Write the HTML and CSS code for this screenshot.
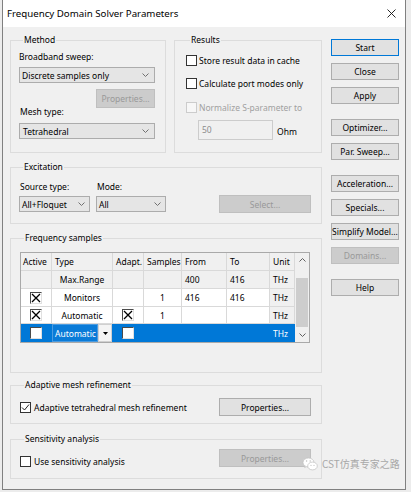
FILE: index.html
```html
<!DOCTYPE html>
<html lang="en">
<head>
<meta charset="utf-8">
<title>Frequency Domain Solver Parameters</title>
<link rel="stylesheet" href="styles.css">
</head>
<body>
<div class="window">
  <div class="titlebar">
    <span class="title">Frequency Domain Solver Parameters</span>
    <svg class="close-x" width="9" height="9" viewBox="0 0 9 9"><path d="M0.5 0.5L8.5 8.5M8.5 0.5L0.5 8.5" stroke="#111" stroke-width="0.9" fill="none"/></svg>
  </div>
  <div class="content">
    <div class="main">
      <div class="toprow">
        <div class="grp method">
          <div class="grp-title">Method</div>
          <div class="lbl m-bb">Broadband sweep:</div>
          <div class="combo m-combo1"><span>Discrete samples only</span><svg class="chev" width="7" height="4" viewBox="0 0 7 4"><path d="M0.5 0.5L3.5 3.5L6.5 0.5" stroke="#707070" fill="none"/></svg></div>
          <div class="mesh-row">
            <div class="lbl">Mesh type:</div>
            <div class="btn disabled m-prop">Properties...</div>
          </div>
          <div class="combo m-combo2"><span>Tetrahedral</span><svg class="chev" width="7" height="4" viewBox="0 0 7 4"><path d="M0.5 0.5L3.5 3.5L6.5 0.5" stroke="#707070" fill="none"/></svg></div>
        </div>
        <div class="grp results">
          <div class="grp-title">Results</div>
          <div class="chk-row r1"><span class="chk"></span><span>Store result data in cache</span></div>
          <div class="chk-row r2"><span class="chk"></span><span>Calculate port modes only</span></div>
          <div class="chk-row r3 dis"><span class="chk"></span><span>Normalize S-parameter to</span></div>
          <div class="ohm-row"><div class="input">50</div><span class="ohm">Ohm</span></div>
        </div>
      </div>

      <div class="grp excitation">
        <div class="grp-title">Excitation</div>
        <div class="ex-row">
          <div class="ex-col">
            <div class="lbl">Source type:</div>
            <div class="combo c-src"><span>All+Floquet</span><svg class="chev" width="7" height="4" viewBox="0 0 7 4"><path d="M0.5 0.5L3.5 3.5L6.5 0.5" stroke="#707070" fill="none"/></svg></div>
          </div>
          <div class="ex-col">
            <div class="lbl">Mode:</div>
            <div class="combo c-mode"><span>All</span><svg class="chev" width="7" height="4" viewBox="0 0 7 4"><path d="M0.5 0.5L3.5 3.5L6.5 0.5" stroke="#707070" fill="none"/></svg></div>
          </div>
          <div class="btn disabled b-wide b-select">Select...</div>
        </div>
      </div>

      <div class="grp freq">
        <div class="grp-title">Frequency samples</div>
        <div class="fgrid">
          <div class="hc">Active</div>
          <div class="hc">Type</div>
          <div class="hc">Adapt.</div>
          <div class="hc">Samples</div>
          <div class="hc">From</div>
          <div class="hc">To</div>
          <div class="hc">Unit</div>
          <div class="vscroll">
            <div class="sc-btn"><svg width="7" height="4" viewBox="0 0 7 4"><path d="M0.5 3.5L3.5 0.5L6.5 3.5" stroke="#606060" fill="none"/></svg></div>
            <div class="thumb"></div>
            <div class="sc-btn sc-down"><svg width="7" height="4" viewBox="0 0 7 4"><path d="M0.5 0.5L3.5 3.5L6.5 0.5" stroke="#606060" fill="none"/></svg></div>
          </div>

          <div class="gc fix"></div>
          <div class="gc fix ctr">Max.Range</div>
          <div class="gc fix"></div>
          <div class="gc fix"></div>
          <div class="gc fix">400</div>
          <div class="gc fix">416</div>
          <div class="gc fix">THz</div>

          <div class="gc ctr"><span class="gchk"><svg width="10" height="10" viewBox="0 0 10 10"><path d="M1 1L9 9M9 1L1 9" stroke="#000" stroke-width="1.3"/></svg></span></div>
          <div class="gc ctr">Monitors</div>
          <div class="gc"></div>
          <div class="gc ctr">1</div>
          <div class="gc">416</div>
          <div class="gc">416</div>
          <div class="gc fix">THz</div>

          <div class="gc ctr"><span class="gchk"><svg width="10" height="10" viewBox="0 0 10 10"><path d="M1 1L9 9M9 1L1 9" stroke="#000" stroke-width="1.3"/></svg></span></div>
          <div class="gc ctr">Automatic</div>
          <div class="gc ctr"><span class="gchk"><svg width="10" height="10" viewBox="0 0 10 10"><path d="M1 1L9 9M9 1L1 9" stroke="#000" stroke-width="1.3"/></svg></span></div>
          <div class="gc ctr">1</div>
          <div class="gc"></div>
          <div class="gc"></div>
          <div class="gc fix">THz</div>

          <div class="gc sel ctr"><span class="gchk"></span></div>
          <div class="gc sel edit"><span class="edit-box">Automatic</span><span class="drop-btn"><svg width="5" height="3" viewBox="0 0 5 3"><path d="M0 0H5L2.5 3Z" fill="#000"/></svg></span></div>
          <div class="gc sel ctr"><span class="gchk"></span></div>
          <div class="gc sel"></div>
          <div class="gc sel"></div>
          <div class="gc sel"></div>
          <div class="gc sel">THz</div>
        </div>
      </div>

      <div class="grp adaptive">
        <div class="grp-title">Adaptive mesh refinement</div>
        <div class="ad-row">
          <div class="chk-row"><span class="chk"><svg width="9" height="9" viewBox="0 0 9 9"><path d="M1 4.5L3.5 7L8 1.5" stroke="#222" stroke-width="1" fill="none"/></svg></span><span>Adaptive tetrahedral mesh refinement</span></div>
          <div class="btn b-wide">Properties...</div>
        </div>
      </div>

      <div class="grp sens">
        <div class="grp-title">Sensitivity analysis</div>
        <div class="se-row">
          <div class="chk-row"><span class="chk"></span><span>Use sensitivity analysis</span></div>
          <div class="btn disabled b-wide">Properties...</div>
        </div>
      </div>
    </div>

    <div class="side">
      <div class="btn default">Start</div>
      <div class="btn">Close</div>
      <div class="btn">Apply</div>
      <div class="btn sep">Optimizer...</div>
      <div class="btn">Par. Sweep...</div>
      <div class="btn sep">Acceleration...</div>
      <div class="btn">Specials...</div>
      <div class="btn">Simplify Model...</div>
      <div class="btn disabled">Domains...</div>
      <div class="btn sep">Help</div>
    </div>
  </div>
</div>

<div class="watermark">
  <svg width="16" height="14" viewBox="0 0 16 14">
    <path d="M6.5 1C3.4 1 1 3 1 5.5c0 1.4.8 2.6 2 3.4L2.6 10.6l2-1.1c.6.2 1.2.3 1.9.3" fill="#fff" stroke="#c4c4c4" stroke-width="0.8"/>
    <ellipse cx="6.5" cy="5.5" rx="5.5" ry="4.5" fill="#fff" stroke="#c4c4c4" stroke-width="0.8"/>
    <ellipse cx="10.5" cy="9" rx="4.8" ry="3.9" fill="#fff" stroke="#c4c4c4" stroke-width="0.8"/>
    <circle cx="4.6" cy="4" r="0.7" fill="#bdbdbd"/>
    <circle cx="8.2" cy="4" r="0.7" fill="#bdbdbd"/>
    <circle cx="9" cy="8.3" r="0.6" fill="#bdbdbd"/>
    <circle cx="12" cy="8.3" r="0.6" fill="#bdbdbd"/>
  </svg>
  <span>CST仿真专家之路</span>
</div>
</body>
</html>
```

FILE: styles.css
```css
* { box-sizing: border-box; }
html, body { margin: 0; padding: 0; }
body {
  width: 411px;
  height: 492px;
  overflow: hidden;
  position: relative;
  background: #ececec;
  font-family: "Noto Sans", "Open Sans", "DejaVu Sans", sans-serif;
  font-size: 8.5px;
  color: #000;
}

.window {
  margin-left: 2px;
  width: 404px;
  height: 490px;
  background: #f0f0f0;
  border: 1px solid #808080;
  border-top: 0;
}

.titlebar {
  height: 27px;
  background: #fff;
  display: flex;
  align-items: center;
  justify-content: space-between;
  padding: 0 9px 0 4px;
}
.title { font-size: 9.7px; line-height: 14px; }
.close-x { display: block; }

.content { display: flex; padding: 12px 0 0 7px; }
.main { width: 312px; margin-top: 1px; }
.toprow { display: flex; gap: 8px; }

.grp { border: 1px solid #dcdcdc; }
.grp-title {
  margin: -7px 0 0 4px;
  padding: 0 1px;
  width: fit-content;
  height: 12px;
  line-height: 12px;
  background: #f0f0f0;
  white-space: nowrap;
}

.lbl { height: 12px; line-height: 12px; white-space: nowrap; }

.combo {
  height: 16px;
  background: #e5e5e5;
  border: 1px solid #acacac;
  display: flex;
  align-items: center;
  justify-content: space-between;
  padding: 0 5px 0 2px;
  white-space: nowrap;
}
.chev { display: block; flex: none; }

.btn {
  display: flex;
  align-items: center;
  justify-content: center;
  background: #e1e1e1;
  border: 1px solid #adadad;
  white-space: nowrap;
}
.btn.disabled { background: #cccccc; border-color: #bfbfbf; color: #999; }
.btn.default { border-color: #0078d7; }
.b-wide { width: 92px; height: 18px; }

/* Method */
.method { width: 156px; padding: 0 10px 13px 8px; }
.m-bb { margin-top: 5px; }
.m-combo1 { margin-top: 4px; }
.mesh-row { margin-top: 6px; height: 29px; display: flex; justify-content: space-between; }
.mesh-row .lbl { align-self: flex-end; padding-left: 1px; }
.m-prop { width: 59px; height: 19px; }
.m-combo2 { margin-top: 5px; padding-left: 3px; }

/* Results */
.results { width: 148px; padding: 0 8px 12px 11px; }
.chk-row { display: flex; align-items: center; height: 12px; white-space: nowrap; }
.chk {
  width: 11px;
  height: 11px;
  border: 1px solid #333;
  background: #fff;
  margin-right: 2px;
  flex: none;
  display: flex;
  align-items: center;
  justify-content: center;
}
.r1 { margin-top: 8px; }
.r2 { margin-top: 11px; }
.r3 { margin-top: 12px; }
.dis { color: #a0a0a0; }
.dis .chk { border-color: #cccccc; background: #f7f7f7; }
.ohm-row { margin-top: 7px; display: flex; align-items: center; }
.input {
  width: 75px;
  height: 20px;
  margin-left: 12px;
  border: 1px solid #cccccc;
  background: #f0f0f0;
  color: #8c8c8c;
  padding: 0 0 2px 3px;
  display: flex;
  align-items: center;
}
.ohm { margin-left: 4px; margin-top: 2px; }

/* Excitation */
.excitation { margin-top: 14px; padding: 0 10px 11px 8px; }
.ex-row { margin-top: 8px; display: flex; align-items: flex-end; }
.ex-col .lbl { padding-left: 1px; }
.ex-col .combo { margin-top: 3px; padding-right: 4px; }
.ex-col + .ex-col { margin-left: 6px; }
.c-src { width: 71px; }
.c-mode { width: 70px; }
.b-select { margin-left: auto; margin-bottom: -1px; }

/* Frequency samples */
.freq { margin-top: 14px; padding: 0 0 29px 9px; }
.fgrid {
  margin-top: 8px;
  width: 290px;
  display: grid;
  grid-template-columns: 31px 61px 31px 38px 45px 43px 25px 14px;
  grid-template-rows: 18px 18px 18px 17px 18px;
  border: 1px solid #a9a9a9;
  background: #fff;
}
.hc, .gc {
  border-right: 1px solid #d9d9d9;
  border-bottom: 1px solid #d9d9d9;
  display: flex;
  align-items: center;
  padding: 0 2px;
  white-space: nowrap;
  overflow: hidden;
}
.hc { background: #f0f0f0; padding-left: 3px; }
.hc:first-child { padding-left: 2px; }
.gc { padding-left: 3px; }
.gc.fix { background: #f0f0f0; }
.ctr { justify-content: center; }
.gc.ctr { padding: 0; }
.gc.sel { background: #0078d7; color: #fff; border-color: #0078d7; border-bottom: 0; }

.gchk {
  width: 12px;
  height: 12px;
  background: #fff;
  border: 1px solid;
  border-color: #4a4a4a #e0e0e0 #e0e0e0 #4a4a4a;
  display: flex;
  align-items: center;
  justify-content: center;
}

.gc.edit { padding: 0; }
.edit-box {
  width: 46px;
  height: 100%;
  border: 1px solid #4b9be0;
  background: #0a7bd8;
  color: #fff;
  display: flex;
  align-items: center;
  padding-left: 2px;
}
.drop-btn {
  width: 14px;
  height: 100%;
  background: #f4f4f4;
  border: 1px solid #d0d0d0;
  display: flex;
  align-items: center;
  justify-content: center;
}

.vscroll {
  grid-column: 8;
  grid-row: 1 / 6;
  background: #f0f0f0;
  display: flex;
  flex-direction: column;
  align-items: center;
}
.sc-btn { height: 14px; width: 100%; display: flex; align-items: center; justify-content: center; }
.thumb { margin-top: 11px; width: 12px; height: 49px; background: #cdcdcd; }
.sc-down { margin-top: auto; }

/* Adaptive / Sensitivity */
.adaptive { margin-top: 12px; padding: 0 10px 7px 9px; }
.ad-row { margin-top: 7px; height: 18px; display: flex; align-items: center; justify-content: space-between; }
.ad-row .chk { margin-right: 3px; }
.sens { margin-top: 15px; padding: 0 10px 11px 9px; }
.se-row { margin-top: 4px; height: 18px; display: flex; align-items: flex-end; justify-content: space-between; }
.se-row .chk { margin-right: 3px; }

/* Side buttons */
.side { width: 68px; margin-left: 9px; display: flex; flex-direction: column; gap: 7px; }
.side .btn { height: 17px; }
.side .sep { margin-top: 8px; }

/* Watermark overlay */
.watermark {
  position: absolute;
  left: 302px;
  top: 457px;
  display: flex;
  align-items: center;
  gap: 4px;
  color: #a8a8a8;
  font-family: "Noto Sans CJK SC", "Noto Sans", sans-serif;
  font-size: 10px;
  line-height: 14px;
}
.watermark svg { display: block; }
```
